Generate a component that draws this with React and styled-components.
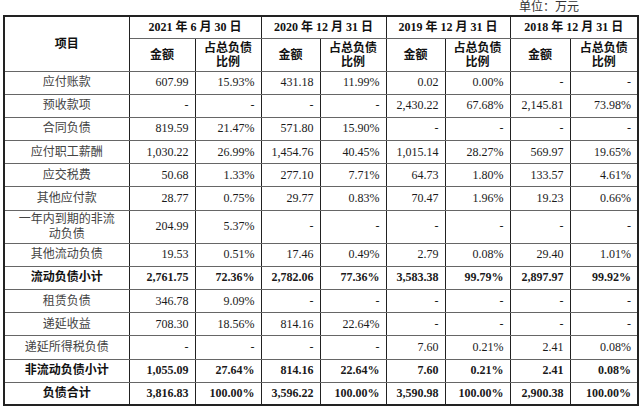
import React from "react";
import styled, { createGlobalStyle } from "styled-components";

const GlobalStyle = createGlobalStyle`
  html, body {
    margin: 0;
    padding: 0;
    background: #fff;
  }
  body {
    font-family: "Liberation Serif", "Noto Sans CJK SC", serif;
    color: #1a1a1a;
  }
`;

const Page = styled.div`
  width: 640px;
  height: 408px;
  padding-left: 3px;
  box-sizing: border-box;
  overflow: hidden;
`;

const Unit = styled.div`
  height: 15px;
  line-height: 14px;
  font-size: 12px;
  text-align: right;
  padding-right: 61px;
  color: #333;
`;

const Table = styled.table`
  border-collapse: collapse;
  table-layout: fixed;
  width: 634px;
  border: 2px solid #222;
  font-size: 12px;
`;

const HeadRow = styled.tr`
  height: ${(p) => p.$h}px;
`;

const Th = styled.th`
  font-weight: bold;
  text-align: center;
  vertical-align: middle;
  padding: 0 2px;
  line-height: 14px;
  border-left: 1px solid #222;
  border-right: 1px solid #222;
  border-top: 1px solid #666;
  border-bottom: 1px solid #666;
  color: #111;
`;

const Row = styled.tr`
  height: ${(p) => (p.$tall ? 33 : 23.2)}px;
  font-weight: ${(p) => (p.$bold ? "bold" : "normal")};
`;

const Label = styled.td`
  text-align: center;
  vertical-align: middle;
  line-height: 15px;
  padding: 0 4px;
  color: ${(p) => (p.$bold ? "#111" : "#444")};
  border-left: 1px solid #222;
  border-right: 1px solid #222;
  border-top: 1px solid #666;
  border-bottom: 1px solid #666;
  white-space: nowrap;
`;

const Num = styled.td`
  text-align: right;
  vertical-align: middle;
  padding: 0 6px 0 2px;
  border-left: 1px solid #222;
  border-right: 1px solid #222;
  border-top: 1px solid #666;
  border-bottom: 1px solid #666;
  white-space: nowrap;
`;

const widths = [125, 66, 66, 59, 66, 59, 65, 60, 68];

const periods = [
  ["2021", "6", "30"],
  ["2020", "12", "31"],
  ["2019", "12", "31"],
  ["2018", "12", "31"],
];

const rows = [
  { name: "应付账款", v: ["607.99", "15.93%", "431.18", "11.99%", "0.02", "0.00%", "-", "-"] },
  { name: "预收款项", v: ["-", "-", "-", "-", "2,430.22", "67.68%", "2,145.81", "73.98%"] },
  { name: "合同负债", v: ["819.59", "21.47%", "571.80", "15.90%", "-", "-", "-", "-"] },
  { name: "应付职工薪酬", v: ["1,030.22", "26.99%", "1,454.76", "40.45%", "1,015.14", "28.27%", "569.97", "19.65%"] },
  { name: "应交税费", v: ["50.68", "1.33%", "277.10", "7.71%", "64.73", "1.80%", "133.57", "4.61%"] },
  { name: "其他应付款", v: ["28.77", "0.75%", "29.77", "0.83%", "70.47", "1.96%", "19.23", "0.66%"] },
  { name: ["一年内到期的非流", "动负债"], tall: true, v: ["204.99", "5.37%", "-", "-", "-", "-", "-", "-"] },
  { name: "其他流动负债", v: ["19.53", "0.51%", "17.46", "0.49%", "2.79", "0.08%", "29.40", "1.01%"] },
  { name: "流动负债小计", bold: true, v: ["2,761.75", "72.36%", "2,782.06", "77.36%", "3,583.38", "99.79%", "2,897.97", "99.92%"] },
  { name: "租赁负债", v: ["346.78", "9.09%", "-", "-", "-", "-", "-", "-"] },
  { name: "递延收益", v: ["708.30", "18.56%", "814.16", "22.64%", "-", "-", "-", "-"] },
  { name: "递延所得税负债", v: ["-", "-", "-", "-", "7.60", "0.21%", "2.41", "0.08%"] },
  { name: "非流动负债小计", bold: true, v: ["1,055.09", "27.64%", "814.16", "22.64%", "7.60", "0.21%", "2.41", "0.08%"] },
  { name: "负债合计", bold: true, v: ["3,816.83", "100.00%", "3,596.22", "100.00%", "3,590.98", "100.00%", "2,900.38", "100.00%"] },
];

export default function App() {
  return (
    <Page>
      <GlobalStyle />
      <Unit>单位：万元</Unit>
      <Table>
        <colgroup>
          {widths.map((w, i) => (
            <col key={i} style={{ width: w }} />
          ))}
        </colgroup>
        <thead>
          <HeadRow $h={22}>
            <Th rowSpan={2}>项目</Th>
            {periods.map(([y, m, d]) => (
              <Th key={y} colSpan={2}>
                {y} 年 {m} 月 {d} 日
              </Th>
            ))}
          </HeadRow>
          <HeadRow $h={33}>
            {periods.map(([y]) => (
              <React.Fragment key={y}>
                <Th>金额</Th>
                <Th>
                  占总负债
                  <br />
                  比例
                </Th>
              </React.Fragment>
            ))}
          </HeadRow>
        </thead>
        <tbody>
          {rows.map((r, i) => (
            <Row key={i} $tall={r.tall} $bold={r.bold}>
              <Label $bold={r.bold}>
                {Array.isArray(r.name) ? (
                  <>
                    {r.name[0]}
                    <br />
                    {r.name[1]}
                  </>
                ) : (
                  r.name
                )}
              </Label>
              {r.v.map((x, j) => (
                <Num key={j}>{x}</Num>
              ))}
            </Row>
          ))}
        </tbody>
      </Table>
    </Page>
  );
}
